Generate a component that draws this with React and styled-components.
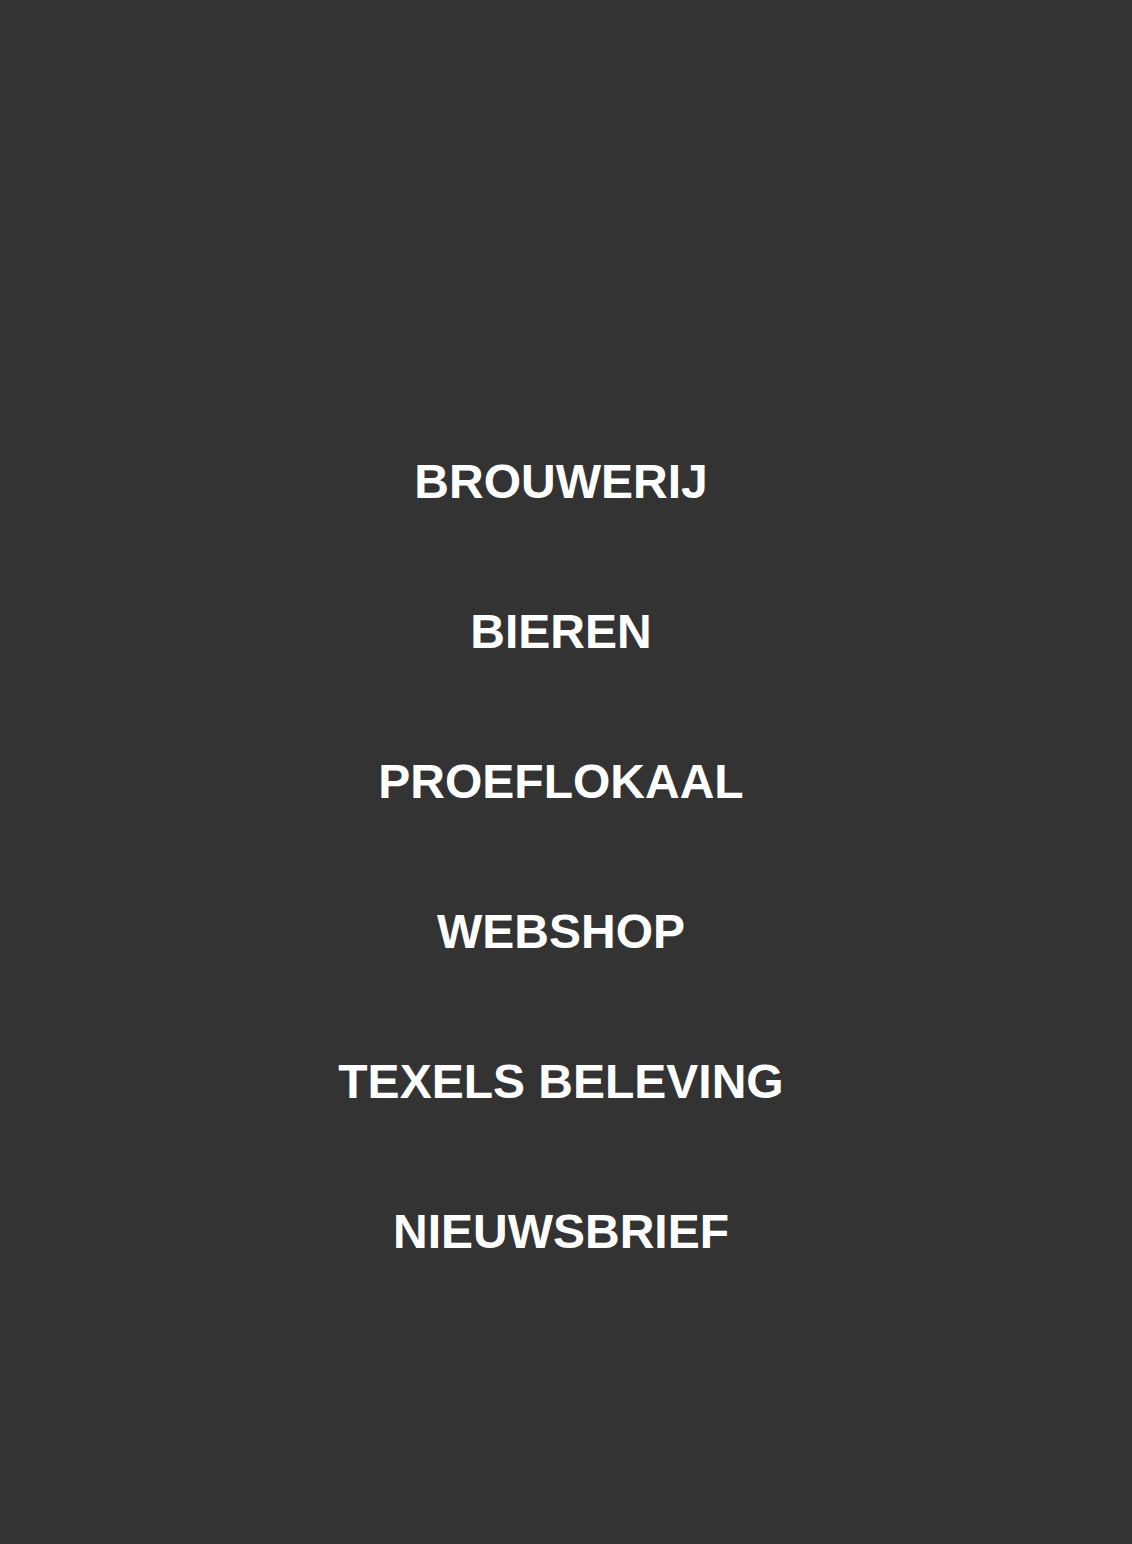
import React from "react";
import styled, { createGlobalStyle } from "styled-components";

const links = [
  "BROUWERIJ",
  "BIEREN",
  "PROEFLOKAAL",
  "WEBSHOP",
  "TEXELS BELEVING",
  "NIEUWSBRIEF",
];

const GlobalStyle = createGlobalStyle`
  html, body {
    margin: 0;
    padding: 0;
    background-color: #333333;
  }
`;

const Page = styled.div`
  min-height: 1544px;
  background-color: #333333;
  box-sizing: border-box;
  padding: 407px 10px 0 0;
`;

const Menu = styled.nav`
  display: flex;
  flex-direction: column;
  align-items: center;
`;

const MenuLink = styled.a`
  display: block;
  height: 150px;
  line-height: 150px;
  color: #ffffff;
  font-family: "Liberation Sans", Arial, sans-serif;
  font-weight: 700;
  font-size: 48px;
  text-decoration: none;
  white-space: nowrap;
  letter-spacing: 0;
`;

const App = () => (
  <>
    <GlobalStyle />
    <Page>
      <Menu>
        {links.map((name) => (
          <MenuLink key={name} href="#">
            {name}
          </MenuLink>
        ))}
      </Menu>
    </Page>
  </>
);

export default App;
